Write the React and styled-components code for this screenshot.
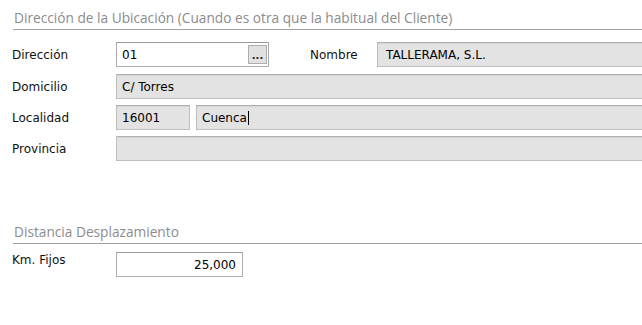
import styled, { createGlobalStyle } from "styled-components";

const GlobalStyle = createGlobalStyle`
  html, body {
    margin: 0;
    padding: 0;
    background: #ffffff;
    overflow: hidden;
  }
`;

const Page = styled.div`
  width: 642px;
  height: 325px;
  overflow: hidden;
  padding: 10px 0 0 12px;
  box-sizing: border-box;
  font-family: "DejaVu Sans", Verdana, sans-serif;
  font-size: 12px;
  color: #111;
`;

const Section = styled.section`
  margin-top: ${(p) => p.top || 0}px;
  margin-right: -20px;
`;

const Header = styled.div`
  margin-left: 1px;
  padding: 0 0 3px 1px;
  border-bottom: 1px solid #a0a0a0;
  font-family: "Open Sans", "Noto Sans", sans-serif;
  font-size: 13.7px;
  line-height: 16px;
  color: #8c8c8c;
`;

const Rows = styled.div`
  display: flex;
  flex-direction: column;
  gap: 6px;
  margin-top: ${(p) => p.top || 12}px;
`;

const Row = styled.div`
  display: flex;
  align-items: ${(p) => (p.top ? "flex-start" : "center")};
  height: 25px;
  margin-bottom: ${(p) => p.mb || 0}px;
`;

const Label = styled.div`
  width: ${(p) => p.w || 104}px;
  margin-left: ${(p) => p.ml || 0}px;
  flex-shrink: 0;
  padding-top: ${(p) => p.pt || 0}px;
`;

const Field = styled.div`
  display: flex;
  align-items: center;
  box-sizing: border-box;
  height: 25px;
  width: ${(p) => (p.w ? `${p.w}px` : "auto")};
  flex: ${(p) => (p.w ? "0 0 auto" : "1 1 auto")};
  margin-right: ${(p) => p.mr || 0}px;
  padding: 0 ${(p) => p.pr || 4}px 0 ${(p) => p.pl || 5}px;
  justify-content: ${(p) => (p.right ? "flex-end" : "flex-start")};
  background: ${(p) => (p.editable ? "#ffffff" : "#e3e3e3")};
  border: 1px solid ${(p) => (p.editable ? "#abadb3" : "#bfbfbf")};
  border-top-color: ${(p) => (p.editable ? "#9a9a9a" : "#b0b0b0")};
  box-shadow: inset 0 1px 0 ${(p) => (p.editable ? "#ffffff" : "#d6d6d6")};
  color: #000;
  white-space: nowrap;
`;

const Value = styled.span`
  flex: 1;
`;

const Caret = styled.span`
  display: inline-block;
  width: 1px;
  height: 14px;
  background: #000;
  vertical-align: middle;
  margin-left: 1px;
`;

const LookupButton = styled.div`
  width: 19px;
  height: 19px;
  box-sizing: border-box;
  border: 1px solid #adadad;
  background: #e1e1e1;
  display: flex;
  align-items: flex-end;
  justify-content: center;
  font-size: 10px;
  font-weight: bold;
  line-height: 14px;
  color: #222;
`;

export default function App() {
  return (
    <>
      <GlobalStyle />
      <Page>
        <Section>
          <Header>
            Dirección de la Ubicación (Cuando es otra que la habitual del
            Cliente)
          </Header>
          <Rows>
            <Row mb={1}>
              <Label>Dirección</Label>
              <Field editable w={153} pr={1}>
                <Value>01</Value>
                <LookupButton>...</LookupButton>
              </Field>
              <Label ml={41} w={67}>
                Nombre
              </Label>
              <Field pl={8}>TALLERAMA, S.L.</Field>
            </Row>
            <Row>
              <Label>Domicilio</Label>
              <Field>C/ Torres</Field>
            </Row>
            <Row>
              <Label>Localidad</Label>
              <Field w={74} mr={6}>
                16001
              </Field>
              <Field>
                Cuenca
                <Caret />
              </Field>
            </Row>
            <Row>
              <Label>Provincia</Label>
              <Field />
            </Row>
          </Rows>
        </Section>
        <Section top={63}>
          <Header>Distancia Desplazamiento</Header>
          <Rows top={8}>
            <Row top>
              <Label pt={1}>Km. Fijos</Label>
              <Field editable w={127} right pr={6}>
                25,000
              </Field>
            </Row>
          </Rows>
        </Section>
      </Page>
    </>
  );
}
